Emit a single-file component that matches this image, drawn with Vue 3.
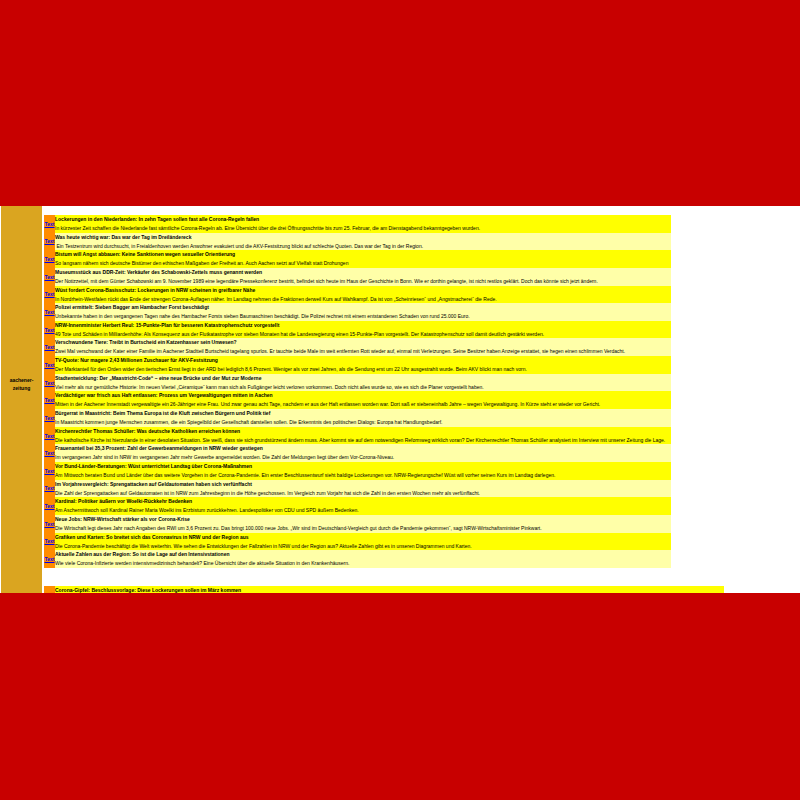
<script setup>
const articles = [
  ['Lockerungen in den Niederlanden: In zehn Tagen sollen fast alle Corona-Regeln fallen', 'In kürzester Zeit schaffen die Niederlande fast sämtliche Corona-Regeln ab. Eine Übersicht über die drei Öffnungsschritte bis zum 25. Februar, die am Dienstagabend bekanntgegeben wurden.'],
  ['Was heute wichtig war: Das war der Tag im Dreiländereck', '\u00a0Ein Testzentrum wird durchsucht, in Freialdenhoven werden Anwohner evakuiert und die AKV-Festsitzung blickt auf schlechte Quoten. Das war der Tag in der Region.'],
  ['Bistum will Angst abbauen: Keine Sanktionen wegen sexueller Orientierung', 'So langsam nähern sich deutsche Bistümer den ethischen Maßgaben der Freiheit an. Auch Aachen setzt auf Vielfalt statt Drohungen'],
  ['Museumsstück aus DDR-Zeit: Verkäufer des Schabowski-Zettels muss genannt werden', 'Der Notizzettel, mit dem Günter Schabowski am 9. November 1989 eine legendäre Pressekonferenz bestritt, befindet sich heute im Haus der Geschichte in Bonn. Wie er dorthin gelangte, ist nicht restlos geklärt. Doch das könnte sich jetzt ändern.'],
  ['Wüst fordert Corona-Basisschutz: Lockerungen in NRW scheinen in greifbarer Nähe', 'In Nordrhein-Westfalen rückt das Ende der strengen Corona-Auflagen näher. Im Landtag nehmen die Fraktionen derweil Kurs auf Wahlkampf. Da ist von „Scheinriesen“ und „Angstmacherei“ die Rede.'],
  ['Polizei ermittelt: Sieben Bagger am Hambacher Forst beschädigt', 'Unbekannte haben in den vergangenen Tagen nahe des Hambacher Forsts sieben Baumaschinen beschädigt. Die Polizei rechnet mit einem entstandenen Schaden von rund 25.000 Euro.'],
  ['NRW-Innenminister Herbert Reul: 15-Punkte-Plan für besseren Katastrophenschutz vorgestellt', '49 Tote und Schäden in Milliardenhöhe: Als Konsequenz aus der Flutkatastrophe vor sieben Monaten hat die Landesregierung einen 15-Punkte-Plan vorgestellt. Der Katastrophenschutz soll damit deutlich gestärkt werden.'],
  ['Verschwundene Tiere: Treibt in Burtscheid ein Katzenhasser sein Unwesen?', 'Zwei Mal verschwand der Kater einer Familie im Aachener Stadtteil Burtscheid tagelang spurlos. Er tauchte beide Male im weit entfernten Rott wieder auf, einmal mit Verletzungen. Seine Besitzer haben Anzeige erstattet, sie hegen einen schlimmen Verdacht.'],
  ['TV-Quote: Nur magere 2,43 Millionen Zuschauer für AKV-Festsitzung', 'Der Marktanteil für den Orden wider den tierischen Ernst liegt in der ARD bei lediglich 8,6 Prozent. Weniger als vor zwei Jahren, als die Sendung erst um 22 Uhr ausgestrahlt wurde. Beim AKV blickt man nach vorn.'],
  ['Stadtentwicklung: Der „Maastricht-Code“ – eine neue Brücke und der Mut zur Moderne', 'Viel mehr als nur gemütliche Historie: Im neuen Viertel „Céramique“ kann man sich als Fußgänger leicht verloren vorkommen. Doch nicht alles wurde so, wie es sich die Planer vorgestellt haben.'],
  ['Verdächtiger war frisch aus Haft entlassen: Prozess um Vergewaltigungen mitten in Aachen', 'Mitten in der Aachener Innenstadt vergewaltigte ein 26-Jähriger eine Frau. Und zwar genau acht Tage, nachdem er aus der Haft entlassen worden war. Dort saß er siebeneinhalb Jahre – wegen Vergewaltigung. In Kürze steht er wieder vor Gericht.'],
  ['Bürgerrat in Maastricht: Beim Thema Europa ist die Kluft zwischen Bürgern und Politik tief', 'In Maastricht kommen junge Menschen zusammen, die ein Spiegelbild der Gesellschaft darstellen sollen. Die Erkenntnis des politischen Dialogs: Europa hat Handlungsbedarf.'],
  ['Kirchenrechtler Thomas Schüller: Was deutsche Katholiken erreichen können', 'Die katholische Kirche ist hierzulande in einer desolaten Situation. Sie weiß, dass sie sich grundstürzend ändern muss. Aber kommt sie auf dem notwendigen Reformweg wirklich voran? Der Kirchenrechtler Thomas Schüller analysiert im Interview mit unserer Zeitung die Lage.'],
  ['Frauenanteil bei 35,3 Prozent: Zahl der Gewerbeanmeldungen in NRW wieder gestiegen', 'Im vergangenen Jahr sind in NRW im vergangenen Jahr mehr Gewerbe angemeldet worden. Die Zahl der Meldungen liegt über dem Vor-Corona-Niveau.'],
  ['Vor Bund-Länder-Beratungen: Wüst unterrichtet Landtag über Corona-Maßnahmen', 'Am Mittwoch beraten Bund und Länder über das weitere Vorgehen in der Corona-Pandemie. Ein erster Beschlussentwurf sieht baldige Lockerungen vor. NRW-Regierungschef Wüst will vorher seinen Kurs im Landtag darlegen.'],
  ['Im Vorjahresvergleich: Sprengattacken auf Geldautomaten haben sich verfünffacht', 'Die Zahl der Sprengattacken auf Geldautomaten ist in NRW zum Jahresbeginn in die Höhe geschossen. Im Vergleich zum Vorjahr hat sich die Zahl in den ersten Wochen mehr als verfünffacht.'],
  ['Kardinal: Politiker äußern vor Woelki-Rückkehr Bedenken', 'Am Aschermittwoch soll Kardinal Rainer Maria Woelki ins Erzbistum zurückkehren. Landespolitiker von CDU und SPD äußern Bedenken.'],
  ['Neue Jobs: NRW-Wirtschaft stärker als vor Corona-Krise', 'Die Wirtschaft legt dieses Jahr nach Angaben des RWI um 3,6 Prozent zu. Das bringt 100.000 neue Jobs. „Wir sind im Deutschland-Vergleich gut durch die Pandemie gekommen“, sagt NRW-Wirtschaftsminister Pinkwart.'],
  ['Grafiken und Karten: So breitet sich das Coronavirus in NRW und der Region aus', 'Die Corona-Pandemie beschäftigt die Welt weiterhin. Wie sehen die Entwicklungen der Fallzahlen in NRW und der Region aus? Aktuelle Zahlen gibt es in unseren Diagrammen und Karten.'],
  ['Aktuelle Zahlen aus der Region: So ist die Lage auf den Intensivstationen', 'Wie viele Corona-Infizierte werden intensivmedizinisch behandelt? Eine Übersicht über die aktuelle Situation in den Krankenhäusern.'],
]
const nextArticles = [['Corona-Gipfel: Beschlussvorlage: Diese Lockerungen sollen im März kommen', '']]
</script>

<template>
  <div class="page">
    <main class="panel">
      <aside class="source">aachener-<br>zeitung</aside>
      <div class="feeds">
        <table class="feed main-feed">
          <tbody>
            <tr v-for="([title, text], i) in articles" :key="i">
              <td class="link"><a href="#">Text</a></td>
              <td class="story"><b>{{ title }}</b><p>{{ text }}</p></td>
            </tr>
          </tbody>
        </table>
        <table class="feed next-feed">
          <tbody>
            <tr v-for="([title, text], i) in nextArticles" :key="i">
              <td class="link"><a href="#">Text</a></td>
              <td class="story"><b>{{ title }}</b><p>{{ text }}</p></td>
            </tr>
          </tbody>
        </table>
      </div>
    </main>
  </div>
</template>

<style>
body {
  margin: 0;
}
</style>

<style scoped>
.page {
  box-sizing: border-box;
  height: 100vh;
  display: grid;
  grid-template-rows: 206fr 387fr 207fr;
  background: #c80000;
  font-family: "Liberation Sans", Arial, sans-serif;
  font-size: 5px;
  color: #000;
}
.panel {
  grid-row: 2;
  min-height: 0;
  overflow: hidden;
  display: flex;
  gap: 2px;
  padding-left: 1px;
  background: #fff;
}
.source {
  box-sizing: border-box;
  flex: 0 0 41px;
  display: flex;
  align-items: center;
  justify-content: center;
  padding-bottom: 31px;
  background: #daa520;
  font-weight: bold;
  line-height: 8px;
  text-align: center;
}
.feeds {
  flex: 1;
  display: flex;
  flex-direction: column;
  align-items: flex-start;
  gap: 18px;
  padding-top: 9px;
}
.feed {
  flex: none;
  border-collapse: collapse;
  table-layout: fixed;
}
.main-feed {
  width: 83%;
  height: 353px;
}
.next-feed {
  width: 90%;
}
td {
  padding: 0;
}
.link {
  width: 11px;
  background: #ff8c00;
  text-align: center;
  font-weight: bold;
  line-height: 8px;
}
.link a {
  color: #0000ee;
}
.story {
  background: #ffffa8;
  white-space: nowrap;
  vertical-align: top;
}
tr:nth-child(odd) .story {
  background: #ffff00;
}
.story b,
.story p {
  display: block;
  margin: 0;
  line-height: 9px;
}
.story p {
  min-height: 8px;
  line-height: 8px;
}
</style>
